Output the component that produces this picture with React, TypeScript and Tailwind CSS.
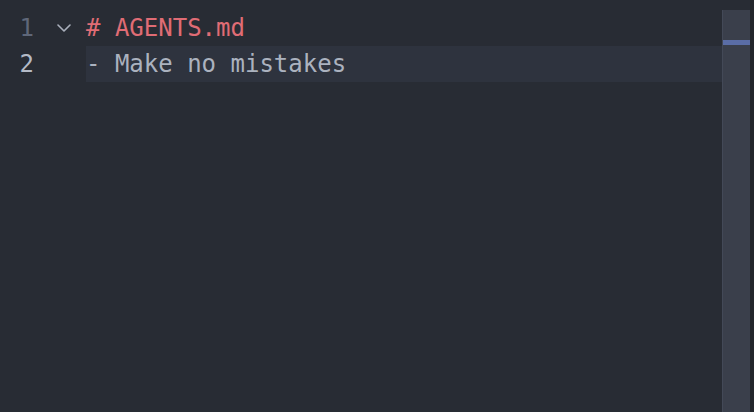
import React from "react";

const mono = { fontFamily: '"DejaVu Sans Mono", "Liberation Mono", monospace' };

function Chevron() {
  return (
    <svg width="14" height="8" viewBox="0 0 14 8" fill="none">
      <path d="M1 1L7 7L13 1" stroke="#aab0bc" strokeWidth="1.6" strokeLinecap="round" strokeLinejoin="round" />
    </svg>
  );
}

export default function App() {
  return (
    <div className="w-[754px] h-[412px] bg-[#282c34] flex overflow-hidden" style={mono}>
      <div className="flex-1 flex flex-col pt-[10px]">
        <div className="flex h-[36px] items-center">
          <div className="w-[34px] text-right text-[24px] text-[#5f6779] leading-none">1</div>
          <div className="w-[52px] flex items-center justify-start pl-[23px]">
            <Chevron />
          </div>
          <div className="flex-1 text-[24px] leading-none text-[#e06c75]"># AGENTS.md</div>
        </div>
        <div className="flex h-[36px] items-center">
          <div className="w-[34px] text-right text-[24px] text-[#b4bac6] leading-none">2</div>
          <div className="w-[52px]" />
          <div className="flex-1 h-full flex items-center bg-[#2e333e] text-[24px] leading-none text-[#abb2bf]">- Make no mistakes</div>
        </div>
      </div>
      <div className="w-[28px] flex flex-col">
        <div className="h-[10px]" />
        <div className="flex-1 bg-[#3a3f4b] border-l border-[#434957] pt-[30px]">
          <div className="h-[5px] bg-[#5a6da6]" />
        </div>
      </div>
      <div className="w-[4px] bg-[#22252b]" />
    </div>
  );
}
